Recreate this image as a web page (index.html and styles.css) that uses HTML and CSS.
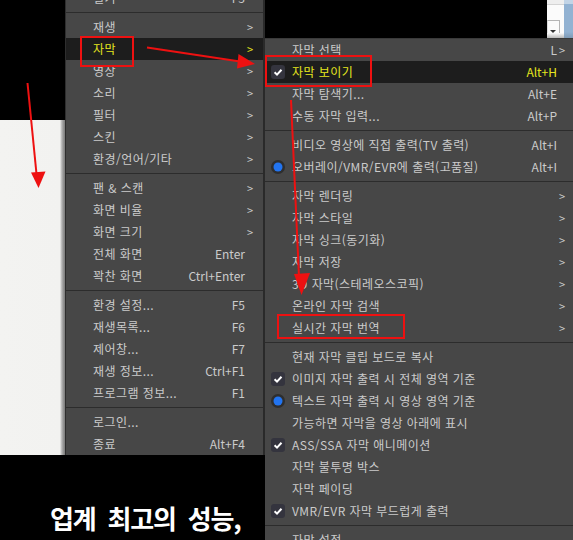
FILE: index.html
```html
<!DOCTYPE html>
<html lang="ko">
<head>
<meta charset="utf-8">
<title>자막 메뉴</title>
<link rel="stylesheet" href="styles.css">
</head>
<body>
<div class="stage">
  <div class="side-window"></div>
  <div class="corner-window">
    <div class="corner-panel"><div class="combo"><span class="combo-arrow"></span></div></div>
    <div class="corner-strip"></div>
  </div>
  <p class="subtitle">업계 최고의 성능,</p>

  <ul class="menu menu-main">
    <li class="item"><span class="icon"></span><span class="label">열기</span><span class="key">F3</span><span class="sub"></span></li>
    <li class="sep"></li>
    <li class="item"><span class="icon"></span><span class="label">재생</span><span class="key"></span><span class="sub">&gt;</span></li>
    <li class="item active"><span class="icon"></span><span class="label">자막</span><span class="key"></span><span class="sub">&gt;</span></li>
    <li class="item"><span class="icon"></span><span class="label">영상</span><span class="key"></span><span class="sub">&gt;</span></li>
    <li class="item"><span class="icon"></span><span class="label">소리</span><span class="key"></span><span class="sub">&gt;</span></li>
    <li class="item"><span class="icon"></span><span class="label">필터</span><span class="key"></span><span class="sub">&gt;</span></li>
    <li class="item"><span class="icon"></span><span class="label">스킨</span><span class="key"></span><span class="sub">&gt;</span></li>
    <li class="item"><span class="icon"></span><span class="label">환경/언어/기타</span><span class="key"></span><span class="sub">&gt;</span></li>
    <li class="sep"></li>
    <li class="item"><span class="icon"></span><span class="label">팬 &amp; 스캔</span><span class="key"></span><span class="sub">&gt;</span></li>
    <li class="item"><span class="icon"></span><span class="label">화면 비율</span><span class="key"></span><span class="sub">&gt;</span></li>
    <li class="item"><span class="icon"></span><span class="label">화면 크기</span><span class="key"></span><span class="sub">&gt;</span></li>
    <li class="item"><span class="icon"></span><span class="label">전체 화면</span><span class="key">Enter</span><span class="sub"></span></li>
    <li class="item"><span class="icon"></span><span class="label">꽉찬 화면</span><span class="key">Ctrl+Enter</span><span class="sub"></span></li>
    <li class="sep"></li>
    <li class="item"><span class="icon"></span><span class="label">환경 설정...</span><span class="key">F5</span><span class="sub"></span></li>
    <li class="item"><span class="icon"></span><span class="label">재생목록...</span><span class="key">F6</span><span class="sub"></span></li>
    <li class="item"><span class="icon"></span><span class="label">제어창...</span><span class="key">F7</span><span class="sub"></span></li>
    <li class="item"><span class="icon"></span><span class="label">재생 정보...</span><span class="key">Ctrl+F1</span><span class="sub"></span></li>
    <li class="item"><span class="icon"></span><span class="label">프로그램 정보...</span><span class="key">F1</span><span class="sub"></span></li>
    <li class="sep"></li>
    <li class="item"><span class="icon"></span><span class="label">로그인...</span><span class="key"></span><span class="sub"></span></li>
    <li class="item"><span class="icon"></span><span class="label">종료</span><span class="key">Alt+F4</span><span class="sub"></span></li>
  </ul>

  <ul class="menu menu-sub">
    <li class="item"><span class="icon"></span><span class="label">자막 선택</span><span class="key">L</span><span class="sub">&gt;</span></li>
    <li class="item active"><span class="icon"><svg class="check" width="14" height="14" viewBox="0 0 14 14"><rect width="14" height="14" rx="3"/><path d="M3.6 7.3 L6 9.6 L10.5 4.7"/></svg></span><span class="label">자막 보이기</span><span class="key">Alt+H</span><span class="sub"></span></li>
    <li class="item"><span class="icon"></span><span class="label">자막 탐색기...</span><span class="key">Alt+E</span><span class="sub"></span></li>
    <li class="item"><span class="icon"></span><span class="label">수동 자막 입력...</span><span class="key">Alt+P</span><span class="sub"></span></li>
    <li class="sep"></li>
    <li class="item"><span class="icon"></span><span class="label">비디오 영상에 직접 출력(TV 출력)</span><span class="key">Alt+I</span><span class="sub"></span></li>
    <li class="item"><span class="icon"><svg class="radio" width="14" height="14" viewBox="0 0 14 14"><circle class="ring" cx="7" cy="7" r="7"/><circle class="dot" cx="7" cy="7" r="4.5"/></svg></span><span class="label">오버레이/VMR/EVR에 출력(고품질)</span><span class="key">Alt+I</span><span class="sub"></span></li>
    <li class="sep"></li>
    <li class="item"><span class="icon"></span><span class="label">자막 렌더링</span><span class="key"></span><span class="sub">&gt;</span></li>
    <li class="item"><span class="icon"></span><span class="label">자막 스타일</span><span class="key"></span><span class="sub">&gt;</span></li>
    <li class="item"><span class="icon"></span><span class="label">자막 싱크(동기화)</span><span class="key"></span><span class="sub">&gt;</span></li>
    <li class="item"><span class="icon"></span><span class="label">자막 저장</span><span class="key"></span><span class="sub">&gt;</span></li>
    <li class="item"><span class="icon"></span><span class="label">3D 자막(스테레오스코픽)</span><span class="key"></span><span class="sub">&gt;</span></li>
    <li class="item"><span class="icon"></span><span class="label">온라인 자막 검색</span><span class="key"></span><span class="sub">&gt;</span></li>
    <li class="item"><span class="icon"></span><span class="label">실시간 자막 번역</span><span class="key"></span><span class="sub">&gt;</span></li>
    <li class="sep"></li>
    <li class="item"><span class="icon"></span><span class="label">현재 자막 클립 보드로 복사</span><span class="key"></span><span class="sub"></span></li>
    <li class="item"><span class="icon"><svg class="check" width="14" height="14" viewBox="0 0 14 14"><rect width="14" height="14" rx="3"/><path d="M3.6 7.3 L6 9.6 L10.5 4.7"/></svg></span><span class="label">이미지 자막 출력 시 전체 영역 기준</span><span class="key"></span><span class="sub"></span></li>
    <li class="item"><span class="icon"><svg class="radio" width="14" height="14" viewBox="0 0 14 14"><circle class="ring" cx="7" cy="7" r="7"/><circle class="dot" cx="7" cy="7" r="4.5"/></svg></span><span class="label">텍스트 자막 출력 시 영상 영역 기준</span><span class="key"></span><span class="sub"></span></li>
    <li class="item"><span class="icon"></span><span class="label">가능하면 자막을 영상 아래에 표시</span><span class="key"></span><span class="sub"></span></li>
    <li class="item"><span class="icon"><svg class="check" width="14" height="14" viewBox="0 0 14 14"><rect width="14" height="14" rx="3"/><path d="M3.6 7.3 L6 9.6 L10.5 4.7"/></svg></span><span class="label">ASS/SSA 자막 애니메이션</span><span class="key"></span><span class="sub"></span></li>
    <li class="item"><span class="icon"></span><span class="label">자막 불투명 박스</span><span class="key"></span><span class="sub"></span></li>
    <li class="item"><span class="icon"></span><span class="label">자막 페이딩</span><span class="key"></span><span class="sub"></span></li>
    <li class="item"><span class="icon"><svg class="check" width="14" height="14" viewBox="0 0 14 14"><rect width="14" height="14" rx="3"/><path d="M3.6 7.3 L6 9.6 L10.5 4.7"/></svg></span><span class="label">VMR/EVR 자막 부드럽게 출력</span><span class="key"></span><span class="sub"></span></li>
    <li class="sep"></li>
    <li class="item"><span class="icon"></span><span class="label">자막 설정...</span><span class="key"></span><span class="sub"></span></li>
  </ul>

  <svg class="marks" width="573" height="540" viewBox="0 0 573 540">
    <g class="mark-lines">
      <rect x="81" y="37" width="52" height="29"/>
      <rect x="266" y="56" width="105" height="30"/>
      <rect x="278" y="315" width="126" height="23"/>
      <line x1="147" y1="47.5" x2="240" y2="61.5"/>
      <line x1="291" y1="100" x2="299" y2="277"/>
      <line x1="27.5" y1="83" x2="36.5" y2="174"/>
    </g>
    <g class="mark-heads">
      <polygon points="255,64 238.5,54 237,68.5"/>
      <polygon points="301.5,295 294,274 310,273"/>
      <polygon points="38.5,188 31,172.5 45.5,171.5"/>
    </g>
  </svg>
</div>
</body>
</html>
```

FILE: styles.css
```css
html, body {
  margin: 0;
  padding: 0;
  background: #000;
}

.stage {
  position: relative;
  width: 573px;
  height: 540px;
  overflow: hidden;
  background: #000;
  font-family: "Noto Sans CJK KR", "Noto Sans", sans-serif;
}

/* window behind the menus, on the left */
.side-window {
  position: absolute;
  left: 0;
  top: 120px;
  width: 65px;
  height: 335px;
  background: linear-gradient(to right, #f3f3f1 0, #f2f2f0 60px, #c9c9c9 61px, #9a9a9a 63px, #7a7a7a 65px);
}

/* window corner visible at the top right */
.corner-window {
  position: absolute;
  left: 547px;
  top: 0;
  width: 26px;
  height: 38px;
  display: flex;
}

.corner-panel {
  width: 17px;
  height: 38px;
  box-sizing: border-box;
  padding-top: 20px;
  background: linear-gradient(#eeeeee 0 4px, #d4d4d4 4px 5px, #fbfbfb 5px 33px, #b8b8b8 38px);
}

.combo {
  width: 13px;
  height: 13px;
  box-sizing: border-box;
  border-top: 1px solid #b5b5b5;
  border-right: 1px solid #b5b5b5;
  border-left: 1px solid #dcdcdc;
  display: flex;
  align-items: center;
  padding-left: 2px;
  padding-top: 8px;
}

.combo-arrow {
  width: 0;
  height: 0;
  border-left: 3px solid transparent;
  border-right: 3px solid transparent;
  border-top: 3px solid #333;
}

.corner-strip {
  width: 9px;
  height: 38px;
  background: linear-gradient(#c2d4e6 0 4px, #92b2d2 4px 32px, #7f9ab5 38px);
}

/* subtitle on the video */
.subtitle {
  position: absolute;
  left: 50px;
  top: 505px;
  margin: 0;
  font-size: 26px;
  line-height: 26px;
  font-weight: 700;
  letter-spacing: -1.2px;
  word-spacing: 6px;
  color: #fff;
  white-space: nowrap;
  text-shadow: 0 0 1px #000, 0 0 2px #000;
}

/* menus */
.menu {
  position: absolute;
  margin: 0;
  padding: 0;
  list-style: none;
  background: #474747;
  color: #cbcbcb;
  font-size: 12px;
}

.menu-main {
  left: 65px;
  top: -13px;
  width: 197px;
  border-left: 1px solid #2e2e2e;
  border-right: 2px solid #2a2a2a;
}

.menu-sub {
  left: 265px;
  top: 38px;
  width: 310px;
  border-top: 1px solid #3a3a3a;
}

.item {
  display: flex;
  align-items: center;
  height: 22px;
  line-height: 22px;
  white-space: nowrap;
}

.item.active {
  background: #1d1d1d;
  color: #e6e61e;
}

.icon {
  flex: none;
  width: 27px;
  height: 22px;
  box-sizing: border-box;
  padding-left: 6px;
  display: flex;
  align-items: center;
}

.label {
  flex: 1;
  letter-spacing: 0.45px;
}

.key {
  flex: none;
}

.sub {
  flex: none;
  width: 18px;
  box-sizing: border-box;
  padding-left: 2px;
  font-size: 11px;
}

.sep {
  height: 7px;
  display: flex;
  align-items: center;
}

.sep::before {
  content: "";
  flex: 1;
  height: 1px;
  background: #2c2c2c;
}

.check rect {
  fill: #34343e;
}

.check path {
  fill: none;
  stroke: #ffffff;
  stroke-width: 2;
}

.radio .ring {
  fill: #2e2e2e;
}

.radio .dot {
  fill: #2274f0;
}

/* red annotations */
.marks {
  position: absolute;
  left: 0;
  top: 0;
  pointer-events: none;
}

.mark-lines {
  fill: none;
  stroke: #ee1111;
  stroke-width: 2;
}

.mark-heads {
  fill: #ee1111;
}
```
